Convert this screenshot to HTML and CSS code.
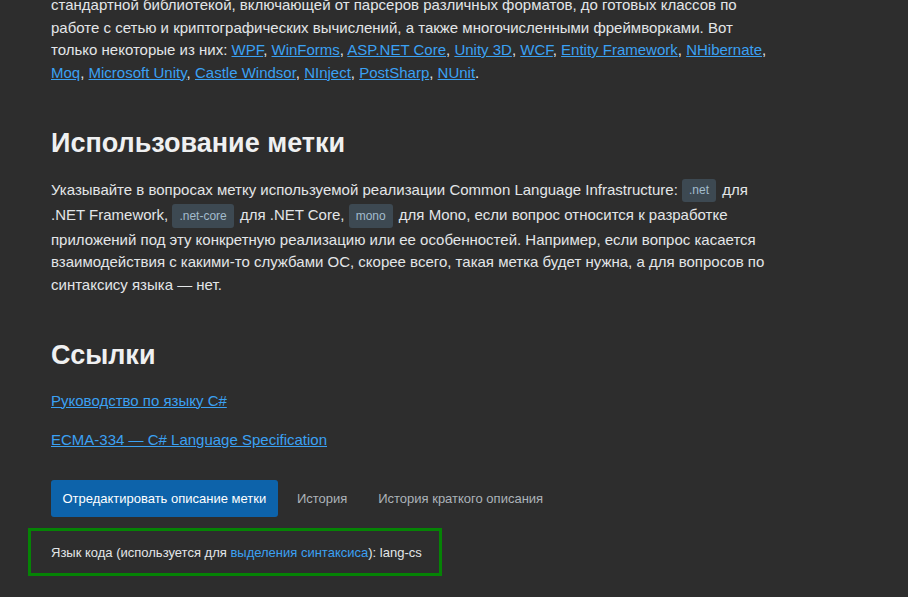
FILE: index.html
```html
<!DOCTYPE html>
<html lang="ru">
<head>
<meta charset="utf-8">
<title>Метка C#</title>
<link rel="stylesheet" href="styles.css">
</head>
<body>
<main class="page">
  <article class="wiki">
    <p class="lead">стандартной библиотекой, включающей от парсеров различных форматов, до готовых классов по работе с сетью и криптографических вычислений, а также многочисленными фреймворками. Вот только некоторые из них: <a href="#">WPF</a>, <a href="#">WinForms</a>, <a href="#">ASP.NET Core</a>, <a href="#">Unity 3D</a>, <a href="#">WCF</a>, <a href="#">Entity Framework</a>, <a href="#">NHibernate</a>, <a href="#">Moq</a>, <a href="#">Microsoft Unity</a>, <a href="#">Castle Windsor</a>, <a href="#">NInject</a>, <a href="#">PostSharp</a>, <a href="#">NUnit</a>.</p>

    <h2>Использование метки</h2>
    <p>Указывайте в вопросах метку используемой реализации Common Language Infrastructure: <span class="tag">.net</span> для .NET Framework, <span class="tag">.net-core</span> для .NET Core, <span class="tag">mono</span> для Mono, если вопрос относится к разработке приложений под эту конкретную реализацию или ее особенностей. Например, если вопрос касается взаимодействия с какими-то службами ОС, скорее всего, такая метка будет нужна, а для вопросов по синтаксису языка — нет.</p>

    <h2>Ссылки</h2>
    <p><a href="#">Руководство по языку C#</a></p>
    <p><a href="#">ECMA-334 — C# Language Specification</a></p>

    <div class="actions">
      <a class="btn btn-primary" href="#">Отредактировать описание метки</a>
      <a class="btn btn-muted" href="#">История</a>
      <a class="btn btn-muted" href="#">История краткого описания</a>
    </div>
  </article>

  <div class="code-lang">Язык кода (используется для <a href="#">выделения синтаксиса</a>): lang-cs</div>
</main>
</body>
</html>
```

FILE: styles.css
```css
html, body {
  margin: 0;
  padding: 0;
  background: #2d2d2d;
}

body {
  font-family: "Liberation Sans", Arial, sans-serif;
  color: #e3e6e8;
  height: 597px;
  overflow: hidden;
}

.page {
  padding: 0 28px;
}

.wiki {
  margin-top: -6px;
  padding-left: 23px;
  max-width: 725px;
  font-size: 15px;
  line-height: 22.5px;
}

.wiki p {
  margin: 0 0 16.5px;
}

.wiki a {
  color: #3ba1f3;
  text-decoration: underline;
}

.wiki h2 {
  margin: 42px 0 16.5px;
  font-size: 27px;
  line-height: 35px;
  font-weight: bold;
  color: #eff0f1;
}

.tag {
  display: inline-block;
  font-size: 12px;
  line-height: 1;
  padding: 4.8px 6px;
  border: 1px solid transparent;
  border-radius: 3px;
  margin: 1px 2px 1px 0;
  background: #3d4952;
  color: #a3bccd;
}

.actions {
  margin-top: 28.5px;
  display: flex;
  gap: 8px;
}

.wiki .btn {
  display: inline-block;
  font-size: 13px;
  line-height: 15px;
  padding: 10.4px;
  border: 1px solid transparent;
  border-radius: 3px;
  text-decoration: none;
}

.wiki .btn-primary {
  background: #0d63aa;
  color: #ffffff;
}

.wiki .btn-muted {
  color: #acb3b9;
  background: transparent;
}

.code-lang {
  display: inline-block;
  margin-top: 11px;
  border: 3px solid #058305;
  padding: 12.5px 17px 12.5px 20px;
  font-size: 13px;
  line-height: 17px;
  color: #e3e6e8;
}

.code-lang a {
  color: #3ba1f3;
  text-decoration: none;
}
```
